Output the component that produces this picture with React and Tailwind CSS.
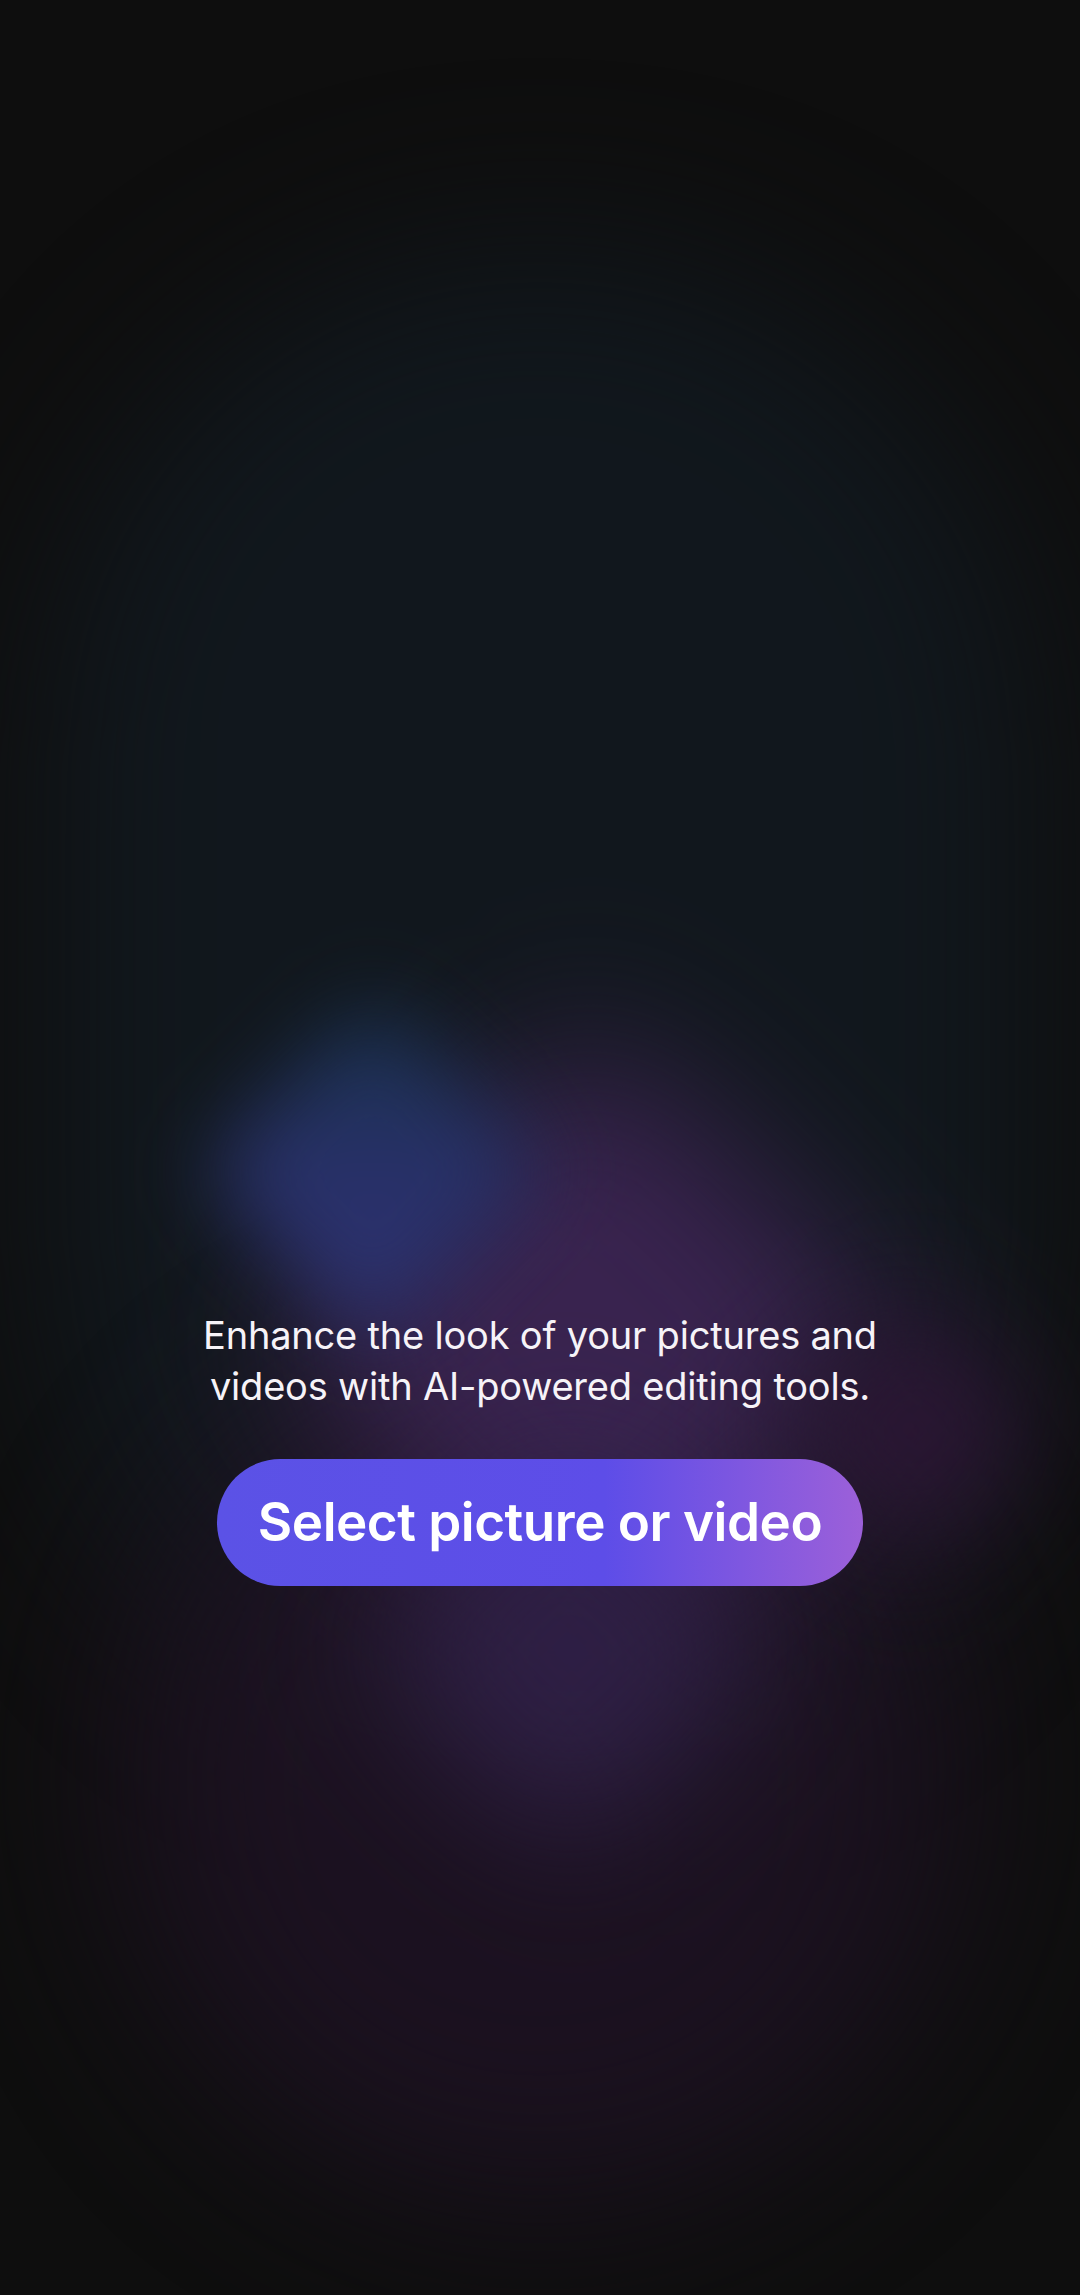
export default function App() {
  return (
    <div className="relative w-[1080px] h-[2295px] overflow-hidden bg-[#0e0e0e]" style={{ fontFamily: 'Inter, "Noto Sans", sans-serif' }}>
      {/* background glows */}
      <div className="absolute inset-0 pointer-events-none">
        <div className="absolute left-[40px] top-[250px] w-[1000px] h-[1500px] rounded-full bg-[#121a21] opacity-80 blur-[90px]" />
        <div className="absolute left-[120px] top-[1350px] w-[840px] h-[850px] rounded-full bg-[#1d1222] opacity-90 blur-[90px]" />
        <div className="absolute left-[360px] top-[1110px] w-[460px] h-[460px] rotate-45 rounded-[80px] bg-[#39234f] blur-[80px]" />
        <div className="absolute left-[420px] top-[1500px] w-[300px] h-[300px] rotate-45 rounded-[60px] bg-[#2e1f44] blur-[70px]" />
        <div className="absolute left-[810px] top-[1330px] w-[200px] h-[200px] rotate-45 rounded-[40px] bg-[#2b1634] blur-[60px]" />
        <div className="absolute left-[248px] top-[1045px] w-[250px] h-[250px] rotate-45 rounded-[40px] bg-gradient-to-br from-[#15314a] via-[#283068] to-[#2f3374] blur-[42px]" />
      </div>

      <div className="relative flex flex-col items-center pt-[1310px]">
        <p className="text-center text-[38px] leading-[51px] text-[#f6f3f8] tracking-[-0.2px]">
          Enhance the look of your pictures and
          <br />
          videos with AI-powered editing tools.
        </p>
        <button className="mt-[47px] w-[646px] h-[127px] rounded-full bg-[linear-gradient(90deg,#5b52e6_0%,#5d4de8_60%,#9c60d9_100%)] text-white text-[53px] font-semibold tracking-[-0.5px]">
          Select picture or video
        </button>
      </div>
    </div>
  )
}
